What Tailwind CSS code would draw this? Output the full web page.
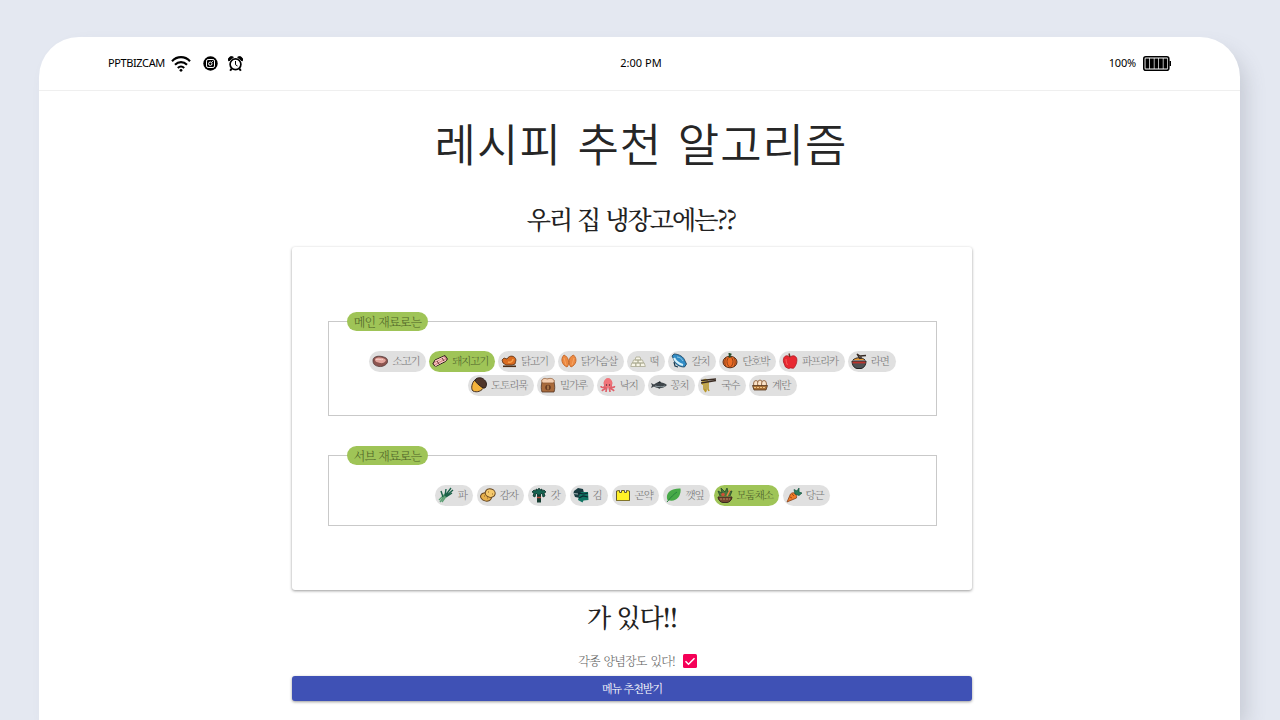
<!DOCTYPE html>
<html lang="ko">
<head>
<meta charset="utf-8">
<title>레시피 추천 알고리즘</title>
<script src="https://cdn.jsdelivr.net/npm/@tailwindcss/browser@4"></script>
</head>
<body class="h-[720px] overflow-hidden bg-[#e4e8f1] pt-[37px] font-['Noto_Serif_CJK_KR','Noto_Sans_CJK_KR',sans-serif]">
<div class="ml-[39px] h-[683px] w-[1201px] rounded-t-[40px] bg-white shadow-[10px_10px_20px_-4px_rgba(90,95,110,0.22)]">
  <header class="grid h-[54px] grid-cols-3 items-center border-b border-[#efefef] px-[69px] font-['Noto_Sans',sans-serif] text-[11px] text-black">
    <div class="flex items-center">
      <span class="w-[63px] whitespace-nowrap tracking-[-0.4px]">PPTBIZCAM</span>
      <svg class="h-4 w-5" viewBox="0 0 20 16" fill="none" stroke="#000" stroke-width="2.1"><path d="M1 5.2C6-.2 14-.2 19 5.2M4 8.8c3.5-3.6 8.5-3.6 12 0M6.8 12c2-2 4.400-2 6.400 0"/><circle cx="10" cy="14.300" r="1.400" fill="#000" stroke="none"/></svg>
      <svg class="ml-[12px] h-[15px] w-[15px]" viewBox="0 0 15 15" fill="none"><circle cx="7.500" cy="7.500" r="7.200" fill="#000"/><rect x="3.500" y="3.500" width="8" height="8" rx="1.600" stroke="#fff" stroke-width="1"/><circle cx="7.300" cy="7.700" r="1.700" stroke="#fff"/><path d="M8.800 6.200l1-1" stroke="#fff"/></svg>
      <svg class="ml-[10px] h-4 w-[15px]" viewBox="0 0 15 16" fill="none" stroke="#000"><path d="M.8 5a3 3 0 0 1 4.600-3.700zM14.200 5a3 3 0 0 0-4.600-3.700z" fill="#000"/><circle cx="7.500" cy="8.300" r="5.400" stroke-width="1.700"/><path d="M7.500 5v3.700l2 1.300" stroke-width="1"/><path d="M3.500 12.800l-1.300 2M11.500 12.800l1.300 2" stroke-width="2"/></svg>
    </div>
    <span class="pl-[3px] text-center">2:00 PM</span>
    <div class="flex items-center justify-end">
      <span class="mr-[7px] tracking-[-0.2px]">100%</span>
      <svg class="h-[15px] w-7" viewBox="0 0 28 15"><rect x="0.800" y="0.800" width="25" height="13.400" rx="2" fill="#fff" stroke="#000" stroke-width="1.600"/><path d="M26.500 5H28v5h-1.500z"/><path d="M2.500 2.500h3.800v10H2.500zM7 2.500h3.800v10H7zM11.500 2.500h3.800v10h-3.800zM16 2.500h3.800v10H16zM20.500 2.500h3.800v10h-3.800z"/></svg>
    </div>
  </header>
  <h1 class="mt-[19px] pl-[3px] text-center font-['Noto_Sans_CJK_KR',sans-serif] text-[45px] leading-[66px] font-[350] tracking-[1px] text-[#262626] [word-spacing:2px]">레시피 추천 알고리즘</h1>
  <main class="ml-[253px] w-[680px] text-center">
    <h2 class="mt-[25px] h-[45px] pr-[2px] text-[25px] leading-[34px] font-medium tracking-[-1.9px] text-[#222]">우리 집 냉장고에는??</h2>
    <section class="mt-px h-[343px] rounded-[3px] bg-white px-9 pt-[74px] shadow-[0_1px_3px_rgba(0,0,0,0.4)]">
      <div class="h-[95px] w-[609px] border border-[#c9c9c9]">
        <div class="-mt-[10px] ml-[18px] h-[19px] w-[81px] rounded-full bg-[#9fc457] text-[12px] leading-[19px] font-light tracking-[-0.8px] whitespace-nowrap text-[#4f6528]">메인 재료로는</div>
        <div id="main" class="mt-[20px] flex flex-wrap justify-center gap-x-[3px] gap-y-[3px] px-8"></div>
      </div>
      <div class="mt-[39px] h-[71px] w-[609px] border border-[#c9c9c9]">
        <div class="-mt-[10px] ml-[18px] h-[19px] w-[81px] rounded-full bg-[#9fc457] text-[12px] leading-[19px] font-light tracking-[-0.8px] whitespace-nowrap text-[#4f6528]">서브 재료로는</div>
        <div id="sub" class="mt-[20px] flex flex-wrap justify-center gap-x-[3.2px] px-8"></div>
      </div>
    </section>
    <h2 class="mt-[9px] h-[36px] text-[25px] leading-[35px] font-medium tracking-[-1.2px] text-[#222]">가 있다!!</h2>
    <div class="mt-[17px] flex h-[18px] items-center justify-center gap-[8px] pl-[11px]">
      <span class="text-[12px] leading-[18px] font-light tracking-[-0.85px] text-[#666] [word-spacing:1px]">각종 양념장도 있다!</span>
      <svg class="h-[14px] w-[14px]" viewBox="0 0 14 14"><rect width="14" height="14" rx="1.500" fill="#f50057"/><path d="M2.500 7.200l3 3 6-6" fill="none" stroke="#fff" stroke-width="1.500"/></svg>
    </div>
    <button class="mt-[6px] block h-[25px] w-full rounded-[3px] bg-[#3f51b5] text-[11px] leading-[25px] tracking-[-1px] text-white shadow-[0_1px_3px_rgba(0,0,0,0.4)]">메뉴 추천받기</button>
  </main>
</div>
<script>
const icons = {
  beef: '<path d="M1 8C.5 4 5 2.500 10 3.500s6 3 5.500 5.500S11 14 7 13.500 1 11 1 8z" fill="#8d5550" stroke="#4b3030" stroke-width=".7"/><path d="M3 6c3-2.500 9-1.500 11 1-1 3-4 3.500-6 3S2.500 9 3 6z" fill="#e3a59d"/><path d="M4 6.500c3-1 5 1 7 0" stroke="#f6d0ca" fill="none"/>',
  pork: '<path d="M.8 11L3 7l10-4.500L15.500 6l-2 2.500-10 5z" fill="#d88b8c" stroke="#302020"/><path d="M2 11l11-6M3 13l11-6M3 8l9-4" stroke="#fbd7cd" fill="none"/><path d="M5 8l2 3M10 5l2 3" stroke="#683333"/>',
  chicken: '<path d="M1 7l2-2 3 1c2-4 8-4 9 1l-1 4-3 1H5L2 10z" fill="#d96b20" stroke="#573015" stroke-width=".8"/><path d="M7 9c3 1 5-1 5-3" fill="none" stroke="#f7a04a" stroke-width="1.500"/><path d="M2 13.300h13" stroke="#4a2d17" stroke-width="1.600"/>',
  breast: '<path d="M3 2c5 2 6 9 3 12C1 12-1 6 3 2zM12.500 2C7 4 7 11 10 14c5-2 7-8 2.500-12z" fill="#ed8a42" stroke="#bd5e20" stroke-width=".8"/><path d="M3 5l2 7M13 5l-2 7" stroke="#f6a565"/>',
  ricecake: '<g fill="#f7f5e7" stroke="#aaa890" stroke-width=".8"><path d="M5 7l1-3h4l1 3zM2.500 10l1-3H8v3zM8 10V7h4.500l1 3zM.8 13.500l1-3.500h4v3.500zM5.800 13.500V10h4.500v3.500zM10.300 13.500V10h4l1 3.500z"/></g>',
  fish: '<path d="M1 3l2-2c5 0 10 3 11 7l1.500 3-2 3C8 14 4 11 3 7z" fill="#318cc5" stroke="#143b58" stroke-width=".8"/><path d="M3 5c2 4 5 6 9 7" stroke="#d6f1fa" stroke-width="2.200" fill="none"/><path d="M6 4c3 0 5 2 6 4" stroke="#8fc9e8" fill="none"/><path d="M3 9l1 4 3 1" stroke="#193a50" stroke-width="1.200" fill="none"/>',
  pumpkin: '<ellipse cx="8" cy="9" rx="7" ry="5.800" fill="#ed6c25" stroke="#55301c"/><path d="M8 3.500c-4 2-4 8 0 11 4-3 4-9 0-11M4 5c-2 3-1 7 0 9M12 5c2 3 1 7 0 9" fill="none" stroke="#813b17" stroke-width=".9"/><path d="M8 4.500L7.500 1l2 .5" stroke="#244d2b" stroke-width="1.800" fill="none"/>',
  pepper: '<path d="M8 4C4 1 .5 4 1.500 9l2 5 3 1.500 2-.6 3 .4c3-3 4-8 3-10.500-2-3-4.500-2-6.500-.8z" fill="#e82831" stroke="#ad1a24" stroke-width=".8"/><path d="M8 4L7 .5" stroke="#663223" stroke-width="1.400"/><path d="M4 6c0 3 1 5 1.500 6" stroke="#f6625e" fill="none"/>',
  ramen: '<path d="M1 8h14c0 4-2 7-5 7.500H6C3 15 1 12 1 8z" fill="#4f5154" stroke="#242323"/><path d="M2 7c3-3 9-3 12 0" fill="#e79a36" stroke="#242323"/><path d="M1.500 9.500h13" stroke="#bd322c" stroke-width="1.800"/><path d="M9 6L6 1l3 2 6-.5M10 6V3" stroke="#382c27" fill="none" stroke-width="1.300"/>',
  acorn: '<path d="M4 3C1 5-.5 12 2 14c4 2 9 0 11-4z" fill="#f4b33c" stroke="#453021"/><path d="M4 3c2-3 7-3 9.500 0 2.500 2 2.500 6 .5 8-2 0-4-1-6-3S4 5 4 3z" fill="#51372b" stroke="#2e211b"/>',
  flour: '<path d="M2 5h12c1 4 1 7 0 10H2C1 12 1 9 2 5z" fill="#a96b3c" stroke="#503221" stroke-width=".8"/><path d="M1.500 4c1-3 4-3 5.500-2 3-1 6-1 7.500 2l-1 2H2.500z" fill="#f4ceb0" stroke="#925a32" stroke-width=".8"/><circle cx="8" cy="10.500" r="2.800" fill="#6a3c22"/><path d="M8 8.500v4" stroke="#e1a969"/>',
  octopus: '<path d="M5 9C1 1 15 1 11 9M5.500 9C4 11 1 11 1 9M6 9c0 4-3 3-4 5M7 9c0 3-1 4-1 6M10.500 9c1 2 4 2 4 0M10 9c0 4 3 3 4 5M9 9c0 3 1 4 1 6" fill="none" stroke="#e0606a" stroke-width="1.700"/><ellipse cx="8" cy="5.800" rx="4" ry="4.800" fill="#f1747a"/><circle cx="6.500" cy="8" r=".7" fill="#4a2c32"/><circle cx="9.500" cy="8" r=".7" fill="#4a2c32"/>',
  saury: '<path d="M0 6l3 1.500C7 4 12 5 16 8c-4 4-9 4-13 1.500L0 11l1-2.500z" fill="#3f464b"/><path d="M6 6l3-2 1 2M7 10l1 2 2-2" fill="#252c30"/><path d="M4 9c4 1 7 1 10 0" stroke="#92a0a5" fill="none"/>',
  noodles: '<path d="M3 4v8l2 3M5 4v10M7 4v8l1 2" fill="none" stroke="#b9982c" stroke-width="1.600"/><path d="M1.500 8C1 1 7 1 7 6" fill="none" stroke="#d0ae35" stroke-width="1.500"/><path d="M0 3.500L15 2M0 6l15-2.500" stroke="#3b2c23" stroke-width="1.300" fill="none"/>',
  eggs: '<g fill="#fae3c8" stroke="#81512b" stroke-width=".8"><ellipse cx="4" cy="7" rx="2.500" ry="3.500"/><ellipse cx="8" cy="6.500" rx="2.500" ry="3.500"/><ellipse cx="12" cy="7" rx="2.500" ry="3.500"/></g><path d="M.5 8.500h15l-1.500 4.500H2z" fill="#a87036" stroke="#55371e" stroke-width=".8"/><path d="M2 10.500h12" stroke="#f1c687" stroke-dasharray="2 1"/>',
  leek: '<path d="M2 15L8 7M4 15l5-7M1 13l6-6" stroke="#5d9f74" stroke-width="1.300"/><path d="M5 10L3 4M7 9l1-7M7 9l6-8M8 9l7-6M8 10l6-4" stroke="#1b6149" stroke-width="1.400"/>',
  potato: '<ellipse cx="6" cy="10" rx="5.500" ry="4" fill="#e7b04c" stroke="#65451f" transform="rotate(15 6 10)"/><ellipse cx="10.200" cy="6" rx="5" ry="4.200" fill="#f5c96c" stroke="#65451f" transform="rotate(15 10 6)"/><path d="M8 5h1m3 2h1M4 9h1m2 2h1" stroke="#8f6428"/>',
  mustard: '<path d="M8 7v8.500" stroke="#153d32" stroke-width="4"/><path d="M7 8L5 6 4 10 2 9l1-3-2-1 2-2 2 1V2l2 1 1-2 1 2 2-1v2l2-1 2 2-2 1 1 3-2 1-1-4-2 2z" fill="#176451" stroke="#0b342b" stroke-width=".8"/><path d="M6 10.500h4" stroke="#bd4a3a" stroke-width="1.400"/>',
  seaweed: '<path d="M1 4l4-3 5 1 1 4-4 5-5-1-1.500-4z" fill="#183b40"/><path d="M8 5h7l.5 8-5 .5-1 2L5 13l1-4z" fill="#127564"/><path d="M5 6l6 1 4-1M6 11l4-2 5 1" fill="none" stroke="#0b2930" stroke-width="1.200"/><path d="M0 6.500l5 .5" stroke="#a8b8ba"/>',
  konjac: '<path d="M1.500 4l3-.5V5.500h2v-2h3v2h2v-2l3 .5v9.500h-13z" fill="#fff127" stroke="#625b2e"/><path d="M1.500 13.500h13" stroke="#827528"/>',
  leaf: '<path d="M1.500 13C-1 7 4 1 14.500 1.500c1 7-4 14.500-13 11.500z" fill="#47a947"/><path d="M1 15C5 10 8 7 11 5" stroke="#26833b" fill="none"/>',
  veg: '<path d="M1 10h14c0 3-3 5.500-5 5.500H6c-2 0-5-2.500-5-5.500z" fill="#754730" stroke="#39291f"/><path d="M3 9L1 4l4 2-1-5 4 4 2-4 1 4 4-1-2 5" fill="#49793b" stroke="#254728" stroke-width=".8"/><circle cx="6" cy="7.500" r="1.800" fill="#ce4f36"/><path d="M10 9l3-6" stroke="#ec8544" stroke-width="1.600"/><path d="M3 12h10" stroke="#bb8960" stroke-dasharray="2 1"/>',
  carrot: '<path d="M1 15L4.500 7c3-3 7 0 6 4z" fill="#ef7b26" stroke="#85411c" stroke-width=".8"/><path d="M4 10l2 1M6 7l2 2" stroke="#a14d18"/><path d="M9 7L8 2.500l3 1.500 2-3v4l3 1-3 2.500z" fill="#287f5d" stroke="#14533d" stroke-width=".7"/>'
};
const groups = {
  main: [['beef','소고기'],['pork','돼지고기',1],['chicken','닭고기'],['breast','닭가슴살'],['ricecake','떡'],['fish','갈치'],['pumpkin','단호박'],['pepper','파프리카'],['ramen','라면'],['acorn','도토리묵'],['flour','밀가루'],['octopus','낙지'],['saury','꽁치'],['noodles','국수'],['eggs','계란']],
  sub: [['leek','파'],['potato','감자'],['mustard','갓'],['seaweed','김'],['konjac','곤약'],['leaf','깻잎'],['veg','모둠채소',1],['carrot','당근']]
};
for (const [id, items] of Object.entries(groups)) {
  document.getElementById(id).innerHTML = items.map(([icon, label, on]) =>
    `<div class="flex h-[21px] items-center rounded-full pl-[3px] ${on ? 'bg-[#9fc457] text-[#50652e]' : 'bg-[#e0e0e0] text-[#777]'}" style="width:${29.8 + 9 * label.length}px"><svg class="mb-px h-4 w-4 shrink-0" viewBox="0 0 16 16" fill="none">${icons[icon]}</svg><span class="mb-px ml-[4px] text-[10.500px] leading-[20px] font-light tracking-[-1.1px] whitespace-nowrap">${label}</span></div>`).join('');
}
</script>
</body>
</html>
